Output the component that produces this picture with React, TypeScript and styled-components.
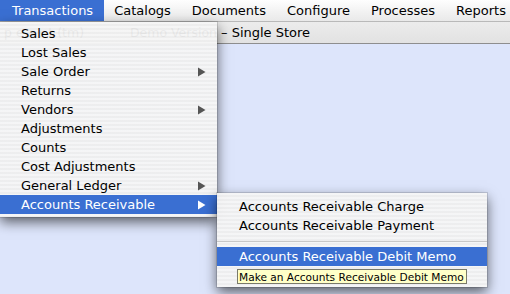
import React from "react";
import styled, { createGlobalStyle } from "styled-components";

const Global = createGlobalStyle`
  html, body { margin: 0; padding: 0; }
  body {
    width: 510px; height: 294px; overflow: hidden;
    background: #dde5fb;
    font-family: "DejaVu Sans", "Liberation Sans", sans-serif;
  }
`;

const Screen = styled.div`
  position: relative;
  width: 510px;
  height: 294px;
  display: flex;
  flex-direction: column;
  overflow: hidden;
  font-size: 13px;
  color: #000;
`;

const MenuBar = styled.div`
  height: 22px;
  flex: none;
  display: flex;
  align-items: stretch;
  background: linear-gradient(#fefefe, #f1f1f1 60%, #e9e9e9);
  box-sizing: border-box;
  border-bottom: 1px solid #b9b9b9;
`;

const MenuTitle = styled.div<{ $active?: boolean }>`
  display: flex;
  align-items: center;
  padding: 0 10.5px 1px;
  white-space: nowrap;
  background: ${(p) => (p.$active ? "#3a6fd2" : "transparent")};
  color: ${(p) => (p.$active ? "#fff" : "#000")};
  &:first-child {
    padding-left: 12px;
  }
`;

const Window = styled.div`
  flex: 1;
  display: flex;
  flex-direction: column;
`;

const TitleBar = styled.div`
  height: 22px;
  flex: none;
  box-sizing: border-box;
  display: flex;
  align-items: center;
  background: linear-gradient(#ececec, #e2e2e2);
  border-bottom: 1px solid #8e8e8e;
  white-space: nowrap;
`;

const TitleLead = styled.span`
  width: 221px;
  box-sizing: border-box;
  padding: 0 4px 0 4px;
  display: flex;
  justify-content: space-between;
  font-size: 12.5px;
`;

const Content = styled.div`
  flex: 1;
  background: #dde5fb;
`;

const Menu = styled.div<{ $left: number; $top: number; $width: number }>`
  position: absolute;
  left: ${(p) => p.$left}px;
  top: ${(p) => p.$top}px;
  width: ${(p) => p.$width}px;
  box-sizing: border-box;
  padding: 2px 0 3px;
  background: repeating-linear-gradient(
    to bottom,
    rgba(246, 246, 246, 0.95) 0 2px,
    rgba(238, 238, 238, 0.95) 2px 4px
  );
  box-shadow: 0 5px 12px rgba(0, 0, 0, 0.6), 0 0 0 1px rgba(0, 0, 0, 0.12);
`;

const SubMenu = styled(Menu)`
  padding-top: 4px;
  padding-bottom: 2px;
`;

const Row = styled.div<{ $selected?: boolean; $faint?: boolean; $indent: number }>`
  height: 19px;
  display: flex;
  align-items: center;
  justify-content: space-between;
  padding: 0 11px 0 ${(p) => p.$indent}px;
  white-space: nowrap;
  background: ${(p) => (p.$selected ? "#3a6fd2" : "transparent")};
  color: ${(p) => (p.$selected ? "#fff" : p.$faint ? "#d2d2d2" : "#000")};
`;

const Separator = styled.div`
  height: 12px;
  display: flex;
  align-items: center;
  &::after {
    content: "";
    flex: 1;
    height: 1px;
    background: #c8c8c8;
  }
`;

const Arrow = styled.svg<{ $light?: boolean }>`
  width: 8px;
  height: 10px;
  fill: ${(p) => (p.$light ? "#fff" : "#555")};
`;

const Tooltip = styled.div`
  position: absolute;
  left: 237px;
  top: 269px;
  height: 15px;
  box-sizing: border-box;
  padding: 0 2px 0 1px;
  display: flex;
  align-items: center;
  background: #ffffc8;
  border: 1px solid #7a7a6a;
  font-size: 10.6px;
  white-space: nowrap;
  color: #000;
`;

const SubArrow = ({ light }: { light?: boolean }) => (
  <Arrow $light={light} viewBox="0 0 8 10">
    <polygon points="0,0.5 7.5,5 0,9.5" />
  </Arrow>
);

const mainItems: { label: string; sub?: boolean; selected?: boolean }[] = [
  { label: "Sales" },
  { label: "Lost Sales" },
  { label: "Sale Order", sub: true },
  { label: "Returns" },
  { label: "Vendors", sub: true },
  { label: "Adjustments" },
  { label: "Counts" },
  { label: "Cost Adjustments" },
  { label: "General Ledger", sub: true },
  { label: "Accounts Receivable", sub: true, selected: true },
];

export default function App() {
  return (
    <>
      <Global />
      <Screen>
        <MenuBar>
          <MenuTitle $active>Transactions</MenuTitle>
          <MenuTitle>Catalogs</MenuTitle>
          <MenuTitle>Documents</MenuTitle>
          <MenuTitle>Configure</MenuTitle>
          <MenuTitle>Processes</MenuTitle>
          <MenuTitle>Reports</MenuTitle>
        </MenuBar>
        <Window>
          <TitleBar>
            <TitleLead>
              <span>p e a r t (tm)</span>
              <span>Demo Version</span>
            </TitleLead>
            <span>– Single Store</span>
          </TitleBar>
          <Content />
        </Window>

        <Menu $left={0} $top={22} $width={217}>
          {mainItems.map((it) => (
            <Row key={it.label} $indent={21} $selected={it.selected}>
              <span>{it.label}</span>
              {it.sub && <SubArrow light={it.selected} />}
            </Row>
          ))}
        </Menu>

        <SubMenu $left={217} $top={193} $width={270}>
          <Row $indent={22}>Accounts Receivable Charge</Row>
          <Row $indent={22}>Accounts Receivable Payment</Row>
          <Separator />
          <Row $indent={22} $selected>
            Accounts Receivable Debit Memo
          </Row>
          <Row $indent={22} $faint>
            Accounts Receivable Credit Memo
          </Row>
        </SubMenu>

        <Tooltip>Make an Accounts Receivable Debit Memo</Tooltip>
      </Screen>
    </>
  );
}
